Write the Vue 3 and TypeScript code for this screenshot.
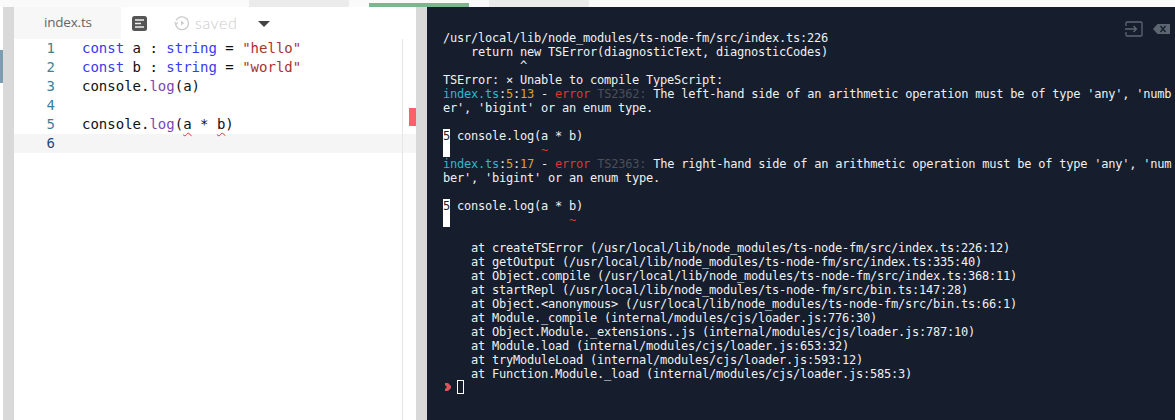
<script setup lang="ts">
interface Seg { t: string; c?: string }
const code: Seg[][] = [
  [{ t: 'const', c: 'kw' }, { t: ' a : ' }, { t: 'string', c: 'kw' }, { t: ' = ' }, { t: '"hello"', c: 'str' }],
  [{ t: 'const', c: 'kw' }, { t: ' b : ' }, { t: 'string', c: 'kw' }, { t: ' = ' }, { t: '"world"', c: 'str' }],
  [{ t: 'console.' }, { t: 'log', c: 'fn' }, { t: '(a)' }],
  [],
  [{ t: 'console.' }, { t: 'log', c: 'fn' }, { t: '(' }, { t: 'a', c: 'squig' }, { t: ' * ' }, { t: 'b', c: 'squig' }, { t: ')' }],
  [],
]
const stack = [
  'createTSError (/usr/local/lib/node_modules/ts-node-fm/src/index.ts:226:12)',
  'getOutput (/usr/local/lib/node_modules/ts-node-fm/src/index.ts:335:40)',
  'Object.compile (/usr/local/lib/node_modules/ts-node-fm/src/index.ts:368:11)',
  'startRepl (/usr/local/lib/node_modules/ts-node-fm/src/bin.ts:147:28)',
  'Object.<anonymous> (/usr/local/lib/node_modules/ts-node-fm/src/bin.ts:66:1)',
  'Module._compile (internal/modules/cjs/loader.js:776:30)',
  'Object.Module._extensions..js (internal/modules/cjs/loader.js:787:10)',
  'Module.load (internal/modules/cjs/loader.js:653:32)',
  'tryModuleLoad (internal/modules/cjs/loader.js:593:12)',
  'Function.Module._load (internal/modules/cjs/loader.js:585:3)',
]
const out: Seg[][] = [
  [{ t: '/usr/local/lib/node_modules/ts-node-fm/src/index.ts:226' }],
  [{ t: '    return new TSError(diagnosticText, diagnosticCodes)' }],
  [{ t: '           ^' }],
  [{ t: 'TSError: ⨯ Unable to compile TypeScript:' }],
  [{ t: 'index.ts', c: 'cy' }, { t: ':' }, { t: '5', c: 'ye' }, { t: ':' }, { t: '13', c: 'ye' }, { t: ' - ' }, { t: 'error', c: 're' }, { t: ' ' }, { t: 'TS2362:', c: 'gr' }, { t: " The left-hand side of an arithmetic operation must be of type 'any', 'numb" }],
  [{ t: "er', 'bigint' or an enum type." }],
  [{ t: ' ' }],
  [{ t: '5', c: 'inv' }, { t: ' console.log(a * b)' }],
  [{ t: ' ', c: 'inv' }, { t: '             ' }, { t: '~', c: 're' }],
  [{ t: 'index.ts', c: 'cy' }, { t: ':' }, { t: '5', c: 'ye' }, { t: ':' }, { t: '17', c: 'ye' }, { t: ' - ' }, { t: 'error', c: 're' }, { t: ' ' }, { t: 'TS2363:', c: 'gr' }, { t: " The right-hand side of an arithmetic operation must be of type 'any', 'num" }],
  [{ t: "ber', 'bigint' or an enum type." }],
  [{ t: ' ' }],
  [{ t: '5', c: 'inv' }, { t: ' console.log(a * b)' }],
  [{ t: ' ', c: 'inv' }, { t: '                 ' }, { t: '~', c: 're' }],
  [{ t: ' ' }],
  ...stack.map((s) => [{ t: '    at ' + s }]),
]
</script>

<template>
  <div class="page">
    <div class="strip">
      <i class="s1"></i><i class="s2"></i><i class="s3"></i><i class="s4"></i><i class="s3"></i><i class="s2"></i>
    </div>
    <div class="main">
      <div class="edge"><i class="edge-mark"></i></div>
      <div class="side"></div>
      <section class="editor">
        <header class="tabs">
          <div class="tab">index.ts</div>
          <svg class="doc" width="15" height="15" viewBox="0 0 15 15">
            <rect width="15" height="15" rx="2.5" fill="#555" />
            <path d="M3 4h9M3 7.500h6M3 11h9" stroke="#eee" stroke-width="1.600" />
          </svg>
          <svg class="hist" width="16" height="16" viewBox="0 0 16 16" fill="none" stroke="#ccc" stroke-width="1.300">
            <path d="M2.200 5.500A6.400 6.400 0 1 1 1.600 8.400" />
            <path d="M0.600 7l1.400 2 1.800-1.600" />
            <path d="M7 5.500l3.200 2.500L7 10.500z" fill="#ccc" stroke="none" />
          </svg>
          <span class="saved">saved</span>
          <i class="caret"></i>
        </header>
        <div class="code">
          <div v-for="(line, i) in code" :key="i" class="row" :class="{ active: i === 5 }">
            <span class="num">{{ i + 1 }}</span>
            <span class="txt"><span v-for="(s, j) in line" :key="j" :class="s.c">{{ s.t }}</span></span>
          </div>
          <div class="ruler"><i class="mark"></i></div>
        </div>
      </section>
      <div class="side"></div>
      <section class="term">
        <div class="term-icons">
          <svg width="18" height="16" viewBox="0 0 18 16" fill="none" stroke="#5c6670" stroke-width="1.300">
            <path d="M1 5V2a1 1 0 0 1 1-1h14a1 1 0 0 1 1 1v12a1 1 0 0 1-1 1H2a1 1 0 0 1-1-1v-3" />
            <path d="M0 8h11M8.500 5l3 3-3 3" />
          </svg>
          <svg width="17" height="10" viewBox="0 0 17 10">
            <path d="M4.500 0H17v10H4.500L0 5z" fill="#5c6670" />
            <path d="M7.500 2l5 6M12.500 2l-5 6" stroke="#1a2230" stroke-width="1.500" />
          </svg>
        </div>
        <div class="out">
          <div v-for="(line, i) in out" :key="i" class="ln"><span v-for="(s, j) in line" :key="j" :class="s.c">{{ s.t }}</span></div>
          <div class="prompt">
            <svg width="7" height="8" viewBox="0 0 7 8"><path d="M0 0h3l3 3v2L3 8H0V6l2-2-2-2z" fill="#e0525a" /></svg>
            <i class="cursor"></i>
          </div>
        </div>
      </section>
    </div>
  </div>
</template>

<style>
html, body { margin: 0; background: #fff; overflow: hidden; }
</style>

<style scoped>
.page { width: 1175px; height: 420px; display: flex; flex-direction: column; overflow: hidden; background: #fff; }
.strip { height: 7px; display: flex; background: #fafafa; flex: none; }
.strip i { display: block; height: 7px; }
.s1 { width: 249px; }
.s2 { width: 100px; background: #ebebeb; }
.s3 { width: 20px; }
.s4 { width: 100px; background: linear-gradient(#fafafa 3px, #7fb58c 3px); }
.main { flex: 1; display: flex; min-height: 0; }
.edge { width: 3px; flex: none; background: #fff; }
.edge-mark { display: block; width: 3px; height: 33px; margin-top: 43px; background: #7c9cb0; }
.side { width: 11px; flex: none; background: #d9d9d9; }
.editor { width: 402px; flex: none; background: #fff; display: flex; flex-direction: column; }
.tabs { height: 32px; display: flex; align-items: center; flex: none; }
.tab { width: 107px; height: 32px; background: #f7f7f7; color: #666; font: 13.500px/31px "Open Sans", sans-serif; padding-left: 30px; box-sizing: border-box; flex: none; letter-spacing: -0.2px; }
.doc { margin-left: 11px; flex: none; }
.hist { margin-left: 27px; flex: none; }
.saved { margin-left: 5px; margin-bottom: 2px; color: #ccc; font: 300 16px "Lato", sans-serif; letter-spacing: 0.6px; }
.caret { margin-left: 21px; margin-top: 1px; width: 0; height: 0; border-left: 6px solid transparent; border-right: 6px solid transparent; border-top: 6px solid #444; }
.code { position: relative; flex: 1; font: 14px/19px "DejaVu Sans Mono", monospace; color: #111; }
.row { height: 19px; display: flex; white-space: pre; }
.row.active { background: #f5f5f5; }
.num { width: 41px; text-align: right; color: #3f7f96; flex: none; }
.active .num { color: #1a4a78; }
.txt { margin-left: 27px; }
.kw { color: #3a3aee; }
.str { color: #a83232; }
.fn { color: #7d45b8; }
.squig { text-decoration: underline wavy #e0352b 1px; text-underline-offset: 3px; }
.ruler { position: absolute; left: 388px; top: 0; bottom: 0; width: 14px; border-left: 1px solid #e6e6e6; box-sizing: border-box; }
.mark { position: absolute; right: 0; top: 69px; width: 7px; height: 18px; background: #ff5f6b; }
.term { position: relative; flex: 1; background: #161d2c; min-width: 0; overflow: hidden; }
.term-icons { position: absolute; top: 14px; right: 5px; display: flex; align-items: center; gap: 10px; }
.out { padding: 23px 0 0 16px; font: 12px/14px "DejaVu Sans Mono", monospace; letter-spacing: -0.224px; color: #eef0f2; white-space: pre; }
.ln { height: 14px; position: relative; top: 1px; }
.cy { color: #2fb8c6; }
.ye { color: #e0a030; }
.re { color: #d63a32; }
.gr { color: #4a4f5a; }
.inv { display: inline-block; width: 7px; height: 14px; background: #fff; color: #161d2c; vertical-align: top; }
.prompt { display: flex; align-items: center; height: 14px; padding-left: 2px; }
.cursor { display: block; width: 5px; height: 12px; margin-left: 5px; border: 1px solid #fff; }
</style>
